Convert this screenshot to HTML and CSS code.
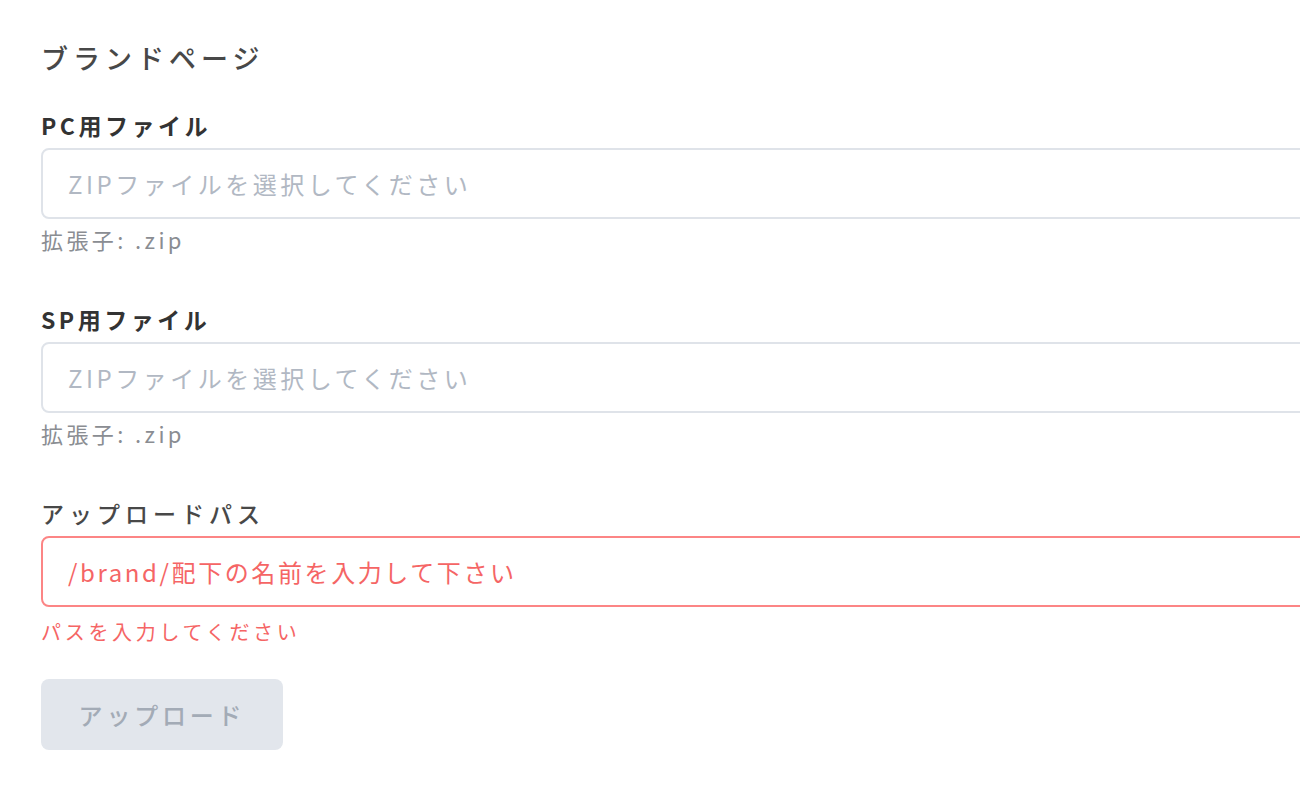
FILE: index.html
```html
<!DOCTYPE html>
<html>
<head>
  <title>ブランドページ</title>
  <link rel="stylesheet" href="styles.css">
</head>
<body>
  <div class="container">
    <h2 class="page-title">ブランドページ</h2>
    <div class="field">
      <label class="field-label" for="pcFile">PC用ファイル</label>
      <input class="field-input" type="text" id="pcFile" placeholder="ZIPファイルを選択してください" readonly>
      <div class="field-help">拡張子: .zip</div>
    </div>
    <div class="field">
      <label class="field-label" for="spFile">SP用ファイル</label>
      <input class="field-input" type="text" id="spFile" placeholder="ZIPファイルを選択してください" readonly>
      <div class="field-help">拡張子: .zip</div>
    </div>
    <div class="field field-last">
      <label class="field-label field-label-light" for="uploadPath">アップロードパス</label>
      <input class="field-input is-invalid" type="text" id="uploadPath" placeholder="/brand/配下の名前を入力して下さい">
      <div class="field-error">パスを入力してください</div>
    </div>
    <button class="upload-btn" disabled>アップロード</button>
  </div>
</body>
</html>
```

FILE: styles.css
```css
body {
  margin: 0;
  font-family: "Noto Sans CJK JP", "Noto Sans", sans-serif;
  background: #fff;
  overflow: hidden;
}

.container {
  width: 1400px;
  padding-left: 41px;
  padding-top: 38px;
}

.page-title {
  margin: 0 0 31px;
  font-size: 27px;
  line-height: 40px;
  font-weight: 500;
  color: #484848;
  letter-spacing: 5px;
}

.field {
  margin-bottom: 48px;
}

.field-last {
  margin-bottom: 0;
}

.field-label {
  display: block;
  font-size: 23px;
  line-height: 32px;
  font-weight: bold;
  color: #333;
  margin-bottom: 7px;
  letter-spacing: 3.5px;
}

.field-label-light {
  font-weight: 500;
  color: #484848;
  letter-spacing: 5px;
}

.field-input {
  display: block;
  box-sizing: border-box;
  width: 100%;
  height: 71px;
  padding: 0 25px;
  border: 2px solid #dfe3e9;
  border-radius: 8px;
  font-family: inherit;
  font-size: 24px;
  letter-spacing: 3.5px;
  color: #333;
  background: #fff;
  outline: none;
}

.field-input::placeholder {
  color: #b1b8c3;
}

.field-input.is-invalid {
  border-color: #fc8585;
}

.field-input.is-invalid::placeholder {
  color: #f56565;
  letter-spacing: 2.6px;
}

.field-help {
  font-size: 22px;
  line-height: 32px;
  margin-top: 4px;
  color: #8a8d92;
  letter-spacing: 3.4px;
}

.field-error {
  font-size: 20px;
  line-height: 28px;
  margin-top: 11px;
  color: #f56565;
  letter-spacing: 3.7px;
}

.upload-btn {
  margin-top: 33px;
  width: 242px;
  height: 71px;
  padding: 0;
  border: none;
  border-radius: 8px;
  background: #e2e6ec;
  color: #a3abb6;
  font-family: inherit;
  font-size: 24px;
  font-weight: 500;
  letter-spacing: 3.8px;
}
```
